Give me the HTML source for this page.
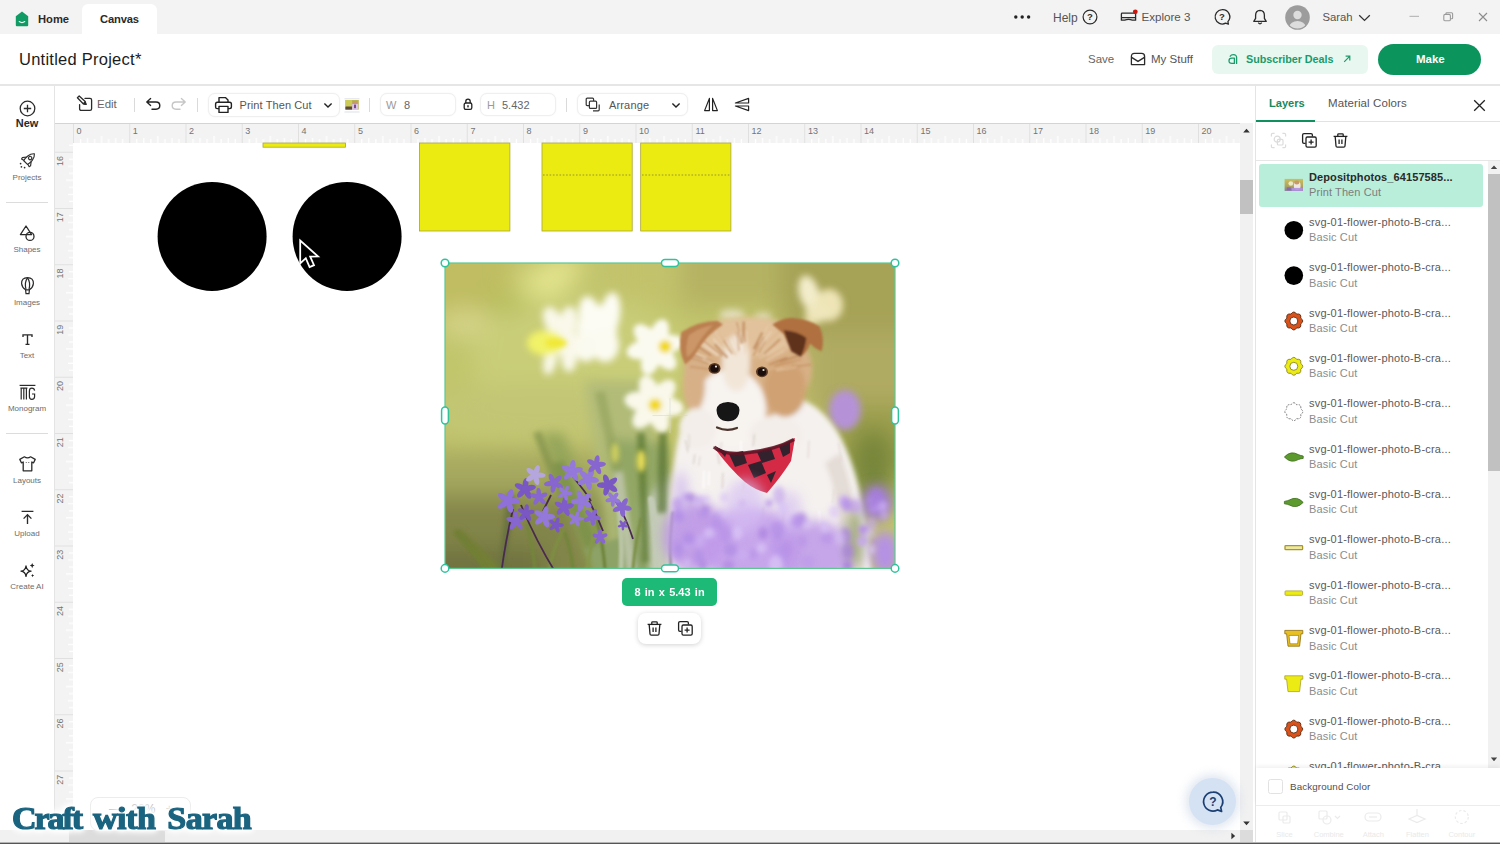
<!DOCTYPE html>
<html lang="en">
<head>
<meta charset="utf-8">
<title>Untitled Project - Canvas</title>
<style>
*{box-sizing:border-box;margin:0;padding:0}
html,body{width:1500px;height:844px;overflow:hidden;background:#fff}
body{font-family:"Liberation Sans",sans-serif;color:#1c1c1c;position:relative}
.a{position:absolute}
.t{position:absolute;white-space:nowrap;line-height:1}
svg{position:absolute;overflow:visible}
/* top bar */
#topbar{left:0;top:0;width:1500px;height:34px;background:#f3f3f3}
#tab{left:82px;top:4px;width:75px;height:30px;background:#fff;border-radius:6px 6px 0 0}
#header{left:0;top:34px;width:1500px;height:50px;background:#fff}
#hline{left:0;top:84px;width:1500px;height:2px;background:#e6e6e6}
/* sidebar */
#side{left:0;top:86px;width:54px;height:744px;background:#fff}
#sideline{left:54px;top:86px;width:1px;height:744px;background:#e4e4e4}
.sl{font-size:8px;color:#6c6c6c;text-align:center;width:54px;left:0}
/* toolbar */
#toolbar{left:55px;top:86px;width:1200px;height:37px;background:#fff}
.box{position:absolute;border:1px solid #efefef;border-radius:7px;background:#fff;box-shadow:0 0 2px rgba(0,0,0,.05)}
.tt{font-size:11.5px;color:#555}
.sep{position:absolute;width:1px;height:14px;top:98px;background:#dadada}
/* rulers */
#rulh{left:55px;top:123px;width:1185px;height:20px;background:#f3f3f3;border-top:1px solid #d4d4d4}
#rulv{left:55px;top:143px;width:18px;height:687px;background:#f3f3f3}
#canvas{left:73px;top:143px;width:1167px;height:687px;background:#fff;overflow:hidden}
.rn{font-size:9px;color:#6e6e6e}
/* scrollbars */
#vs{left:1240px;top:123px;width:13px;height:707px;background:#f1f1f1}
#vst{left:1240px;top:180px;width:13px;height:34px;background:#c1c1c1}
#hs{left:0;top:830px;width:1253px;height:12px;background:#f1f1f1}
#hst{left:69px;top:830px;width:96px;height:12px;background:#dcdcdc}
#botline{left:0;top:842px;width:1500px;height:2px;background:linear-gradient(#b4b4b4 0,#b4b4b4 50%,#555 50%,#555 100%)}
/* panel */
#panel{left:1255px;top:86px;width:245px;height:756px;background:#fff;border-left:1px solid #e4e4e4}
.ln{font-size:11px;color:#4b4b4b;left:1309px}
.ls{font-size:11px;color:#8a8a8a;left:1309px}
</style>
</head>
<body>
<div class="a" id="topbar"></div>
<div class="a" id="tab"></div>
<div class="a" id="header"></div>
<div class="a" id="hline"></div>
<div class="a" id="side"></div>
<div class="a" id="sideline"></div>
<div class="a" id="toolbar"></div>
<div class="a" id="rulh"></div>
<div class="a" id="rulv"></div>
<div class="a" id="canvas"></div>
<div class="a" id="vs"></div>
<div class="a" id="vst"></div>
<div class="a" id="hs"></div>
<div class="a" id="hst"></div>
<div class="a" id="panel"></div>
<div class="a" id="botline"></div>

<!-- top bar content -->
<svg style="left:15px;top:11px" width="14" height="16" viewBox="0 0 14 16"><path d="M7 0.6 L13.2 5.2 V14.2 Q13.2 15.2 12.2 15.2 H1.8 Q0.8 15.2 0.8 14.2 V5.2 Z" fill="#0f9b63"/><path d="M4.3 10.6 Q7 12.6 9.7 10.6" stroke="#e8fff3" stroke-width="1.3" fill="none" stroke-linecap="round"/></svg>
<div class="t" style="left:38px;top:14.200px;font-size:11.200px;font-weight:bold;color:#2a2a2a">Home</div>
<div class="t" style="left:100px;top:14.200px;font-size:11.200px;font-weight:bold;color:#2a2a2a;letter-spacing:-.15px">Canvas</div>
<svg style="left:1013px;top:14px" width="20" height="6"><circle cx="2.800" cy="3" r="1.700" fill="#222"/><circle cx="9.200" cy="3" r="1.700" fill="#222"/><circle cx="15.600" cy="3" r="1.700" fill="#222"/></svg>
<div class="t" style="left:1053px;top:11.500px;font-size:12px;color:#555">Help</div>
<svg style="left:1082px;top:9px" width="16" height="16" viewBox="0 0 16 16"><circle cx="8" cy="8" r="6.9" fill="none" stroke="#2b2b2b" stroke-width="1.2"/><text x="8" y="11.4" font-size="9.5" font-weight="bold" text-anchor="middle" fill="#2b2b2b" font-family="Liberation Sans, sans-serif">?</text></svg>
<svg style="left:1120px;top:9px" width="20" height="14" viewBox="0 0 20 14"><path d="M2.2 4.2 H14.8 Q15.6 4.2 15.6 5 V8.6 H1.4 V5 Q1.4 4.2 2.2 4.2 Z M1.4 8.6 V11.2 H4.6 Q8.5 9.6 12.4 11.2 H15.6 V8.6" fill="none" stroke="#2b2b2b" stroke-width="1.3" stroke-linejoin="round"/><circle cx="15.3" cy="2.8" r="2.4" fill="#c8170d"/></svg>
<div class="t" style="left:1141.500px;top:11.200px;font-size:11.600px;color:#555">Explore 3</div>
<svg style="left:1213px;top:8px" width="18" height="18" viewBox="0 0 18 18"><path d="M9 1.6 A7.2 7.2 0 1 0 12.6 15.2 L15.4 16.2 L14.9 13.6 A7.2 7.2 0 0 0 9 1.6 Z" fill="none" stroke="#2b2b2b" stroke-width="1.3" stroke-linejoin="round"/><text x="9" y="12.2" font-size="9.5" font-weight="bold" text-anchor="middle" fill="#2b2b2b" font-family="Liberation Sans, sans-serif">?</text></svg>
<svg style="left:1252px;top:9px" width="16" height="17" viewBox="0 0 16 17"><path d="M8 1.4 Q3.6 1.6 3.6 6.6 V9.4 L1.8 12.4 H14.2 L12.4 9.4 V6.6 Q12.4 1.6 8 1.4 Z" fill="none" stroke="#2b2b2b" stroke-width="1.3" stroke-linejoin="round"/><path d="M6.3 13.6 Q8 16 9.7 13.6" fill="none" stroke="#2b2b2b" stroke-width="1.3"/></svg>
<svg style="left:1285px;top:5px" width="25" height="25" viewBox="0 0 25 25"><defs><clipPath id="avc"><circle cx="12.5" cy="12.5" r="11"/></clipPath></defs><circle cx="12.5" cy="12.5" r="12.3" fill="#9c9c9c"/><circle cx="12.5" cy="10" r="4.2" fill="#dcdcdc"/><ellipse cx="12.5" cy="21.5" rx="8" ry="5.4" fill="#dcdcdc" clip-path="url(#avc)"/></svg>
<div class="t" style="left:1322.500px;top:11.600px;font-size:11.300px;color:#555">Sarah</div>
<svg style="left:1358px;top:14px" width="13" height="8" viewBox="0 0 13 8"><path d="M1.2 1.2 L6.5 6.4 L11.8 1.2" fill="none" stroke="#333" stroke-width="1.3"/></svg>
<svg style="left:1409px;top:15px" width="11" height="3"><rect x="0.5" y="0.8" width="9.5" height="1.1" fill="#b5b5b5"/></svg>
<svg style="left:1443px;top:12px" width="11" height="10" viewBox="0 0 11 10"><rect x="0.8" y="2.4" width="6.6" height="6.4" rx="1.4" fill="none" stroke="#9a9a9a" stroke-width="1.1"/><path d="M3 2.2 V1.6 Q3 0.8 3.8 0.8 H8.6 Q9.6 0.8 9.6 1.8 V6 Q9.6 6.8 8.8 6.8 H7.6" fill="none" stroke="#9a9a9a" stroke-width="1.1"/></svg>
<svg style="left:1478px;top:12px" width="10" height="10" viewBox="0 0 10 10"><path d="M1 1 L9 9 M9 1 L1 9" stroke="#8c8c8c" stroke-width="1.1"/></svg>


<!-- header content -->
<div class="t" style="left:19px;top:51px;font-size:16.500px;color:#1c1c1c;letter-spacing:.25px">Untitled Project*</div>
<div class="t" style="left:1088px;top:54px;font-size:11.5px;color:#666">Save</div>
<svg style="left:1130px;top:52px" width="16" height="14" viewBox="0 0 16 14"><path d="M1.4 4.4 Q1.4 1.4 4.4 1.4 H11.6 Q14.6 1.4 14.6 4.4 V12.6 H1.4 Z" fill="none" stroke="#2b2b2b" stroke-width="1.3" stroke-linejoin="round"/><path d="M1.6 5.4 L8 9.4 L14.4 5.4" fill="none" stroke="#2b2b2b" stroke-width="1.3"/></svg>
<div class="t" style="left:1151px;top:54px;font-size:11.5px;color:#555">My Stuff</div>
<div class="a" style="left:1212px;top:45px;width:156px;height:29px;border-radius:6px;background:#e8f8f0"></div>
<svg style="left:1227px;top:53px" width="12" height="12" viewBox="0 0 12 12"><path d="M9.6 10.4 V4.6 Q9.6 1.6 6.4 1.6 Q4 1.6 3.2 3.2" fill="none" stroke="#1a9b6c" stroke-width="1.3" stroke-linecap="round"/><path d="M7.4 10.4 H4.8 Q2 10.4 2 7.8 Q2 5.2 4.8 5.2 H7.4 Z" fill="none" stroke="#1a9b6c" stroke-width="1.3" stroke-linejoin="round"/></svg>
<div class="t" style="left:1246px;top:54px;font-size:10.800px;font-weight:bold;color:#1a9b6c;letter-spacing:-.05px">Subscriber Deals</div>
<svg style="left:1343px;top:55px" width="8" height="8" viewBox="0 0 8 8"><path d="M1.2 6.8 L6.6 1.4 M2.6 1.2 H6.8 V5.4" fill="none" stroke="#1a9b6c" stroke-width="1.2"/></svg>
<div class="a" style="left:1378px;top:44px;width:103px;height:31px;border-radius:16px;background:#0c945d"></div>
<div class="t" style="left:1416px;top:54px;font-size:11.5px;font-weight:bold;color:#fff">Make</div>


<!-- sidebar -->
<svg style="left:19px;top:100px" width="17" height="17" viewBox="0 0 17 17"><circle cx="8.5" cy="8.5" r="7.3" fill="none" stroke="#2b2b2b" stroke-width="1.300"/><path d="M8.5 4.8 V12.2 M4.8 8.5 H12.2" stroke="#2b2b2b" stroke-width="1.300"/></svg>
<div class="t" style="left:0;width:54px;text-align:center;top:118px;font-size:11px;font-weight:bold;color:#2a2a2a">New</div>
<svg style="left:18px;top:151px" width="19" height="19" viewBox="0 0 19 19"><g transform="translate(10.600 8.600) rotate(45)" fill="none" stroke="#2f2f2f" stroke-width="1.150" stroke-linejoin="round"><path d="M0 -8.200 C3.800 -5 3.800 1 2.600 4.200 H-2.600 C-3.800 1 -3.800 -5 0 -8.200 Z"/><path d="M-3.200 -.4 L-5.800 3 L-5.400 4.600 L-2.700 3.800 M3.200 -.4 L5.800 3 L5.400 4.600 L2.700 3.800"/><circle cx="0" cy="-2.200" r="1.700"/></g><circle cx="2.600" cy="12.600" r=".85" fill="#2f2f2f"/><circle cx="3.400" cy="15.800" r=".85" fill="#2f2f2f"/><circle cx="6.600" cy="16.600" r=".85" fill="#2f2f2f"/></svg>
<div class="t sl" style="top:173.7px">Projects</div>
<div class="a" style="left:6px;top:202px;width:42px;height:1px;background:#dcdcdc"></div>
<svg style="left:18px;top:224px" width="19" height="19" viewBox="0 0 19 19"><g fill="none" stroke="#2a2a2a" stroke-width="1.300" stroke-linejoin="round"><path d="M8 2 L13.6 10.6 H2.4 Z"/><circle cx="12" cy="12.4" r="4"/></g></svg>
<div class="t sl" style="top:245.7px">Shapes</div>
<svg style="left:19px;top:276px" width="17" height="20" viewBox="0 0 17 20"><g fill="none" stroke="#2a2a2a" stroke-width="1.200"><path d="M8.5 1.6 Q14.6 1.8 14.4 7.6 Q14 11.4 10.4 13.8 H6.6 Q3 11.4 2.6 7.6 Q2.4 1.8 8.5 1.6 Z"/><path d="M8.5 1.8 Q5.2 6 7 13.6 M8.5 1.8 Q11.8 6 10 13.6"/><path d="M6.6 14 L7 17.6 H10 L10.4 14"/></g></svg>
<div class="t sl" style="top:298.7px">Images</div>
<svg style="left:19px;top:331px" width="17" height="17" viewBox="0 0 17 17"><path d="M4 6 V3.800 H13 V6 M8.500 3.800 V13.200 M6.500 13.300 H10.500" fill="none" stroke="#2a2a2a" stroke-width="1.350"/></svg>
<div class="t sl" style="top:351.7px">Text</div>
<svg style="left:18px;top:383px" width="19" height="19" viewBox="0 0 19 19"><g fill="none" stroke="#2a2a2a" stroke-width="1.200"><path d="M1.6 2.4 H17.4"/><path d="M2.4 5.2 H9.4 M3.2 5.2 V16.4 M5.8 5.2 V16.4 M8.4 5.2 V16.4"/><path d="M16.6 7.6 Q16.4 5.2 13.8 5.2 Q11.4 5.2 11.4 8 V13.6 Q11.4 16.4 13.8 16.4 Q16.6 16.4 16.6 13.6 V11 H14"/></g></svg>
<div class="t sl" style="top:404.7px">Monogram</div>
<div class="a" style="left:6px;top:433px;width:42px;height:1px;background:#dcdcdc"></div>
<svg style="left:18px;top:455px" width="19" height="18" viewBox="0 0 19 18"><g fill="none" stroke="#2a2a2a" stroke-width="1.300" stroke-linejoin="round"><path d="M6.4 1.8 Q9.5 4 12.6 1.8 L17.2 4.4 L15.6 7.8 L13.8 7 V15.8 H5.2 V7 L3.4 7.8 L1.8 4.4 Z"/></g><circle cx="8.2" cy="7.4" r=".5" fill="#333"/><circle cx="10.8" cy="7.4" r=".5" fill="#333"/></svg>
<div class="t sl" style="top:476.7px">Layouts</div>
<svg style="left:19px;top:509px" width="17" height="17" viewBox="0 0 17 17"><path d="M2.6 2.4 H14.4 M8.500 15 V6 M4.600 9.600 L8.5 5.6 L12.4 9.600" fill="none" stroke="#2a2a2a" stroke-width="1.350"/></svg>
<div class="t sl" style="top:529.7px">Upload</div>
<svg style="left:18px;top:561px" width="19" height="19" viewBox="0 0 19 19"><path d="M8 5 Q8.6 9.600 13 10.200 Q8.6 10.800 8 15.400 Q7.400 10.800 3 10.200 Q7.400 9.600 8 5 Z" fill="none" stroke="#222" stroke-width="1.300" stroke-linejoin="round"/><path d="M14.200 2 Q14.500 4.300 16.600 4.600 Q14.500 4.900 14.200 7.200 Q13.900 4.900 11.800 4.600 Q13.900 4.300 14.200 2 Z" fill="#222"/><path d="M14.600 13 Q14.800 14.400 16.200 14.600 Q14.800 14.800 14.600 16.200 Q14.400 14.800 13 14.600 Q14.400 14.400 14.600 13 Z" fill="#222"/></svg>
<div class="t sl" style="top:582.7px">Create AI</div>


<!-- toolbar -->
<svg style="left:76px;top:95px" width="18" height="17" viewBox="0 0 18 17"><g fill="none" stroke="#2b2b2b" stroke-width="1.3" stroke-linejoin="round" stroke-linecap="round"><path d="M9 3.400 H14 Q15.600 3.400 15.600 5 V13.800 Q15.600 15.400 14 15.400 H5.200 Q3.600 15.400 3.600 13.800 V9.600"/><path d="M1.400 2.800 L3.200 1 L9.200 6.600 L10 9.400 L7.200 8.800 Z"/><path d="M7.400 8.600 L9 7 L10 9.400 Z" fill="#2b2b2b"/></g></svg>
<div class="t tt" style="left:97px;top:99.200px;color:#666">Edit</div>
<div class="sep" style="left:134px"></div>
<svg style="left:145px;top:97px" width="17" height="14" viewBox="0 0 17 14"><path d="M5.600 1.600 L1.800 5 L5.600 8.400 M2.200 5 H11 Q14.800 5 14.800 8.600 Q14.800 12.200 11 12.200 H7" fill="none" stroke="#222" stroke-width="1.4" stroke-linejoin="round" stroke-linecap="round"/></svg>
<svg style="left:170px;top:97px" width="17" height="14" viewBox="0 0 17 14"><path d="M11.400 1.600 L15.200 5 L11.400 8.400 M14.800 5 H6 Q2.200 5 2.200 8.600 Q2.200 12.200 6 12.200 H10" fill="none" stroke="#c6c6c6" stroke-width="1.400" stroke-linejoin="round" stroke-linecap="round"/></svg>
<div class="sep" style="left:197px"></div>
<div class="box" style="left:208px;top:93px;width:132px;height:24px"></div>
<svg style="left:214px;top:96px" width="19" height="18" viewBox="0 0 19 18"><g fill="none" stroke="#222" stroke-width="1.4" stroke-linejoin="round"><path d="M5 6.200 V1.600 H11.400 L14 4 V6.200"/><path d="M5 12.600 H3.400 Q1.600 12.600 1.600 10.800 V8 Q1.600 6.200 3.400 6.200 H15.600 Q17.400 6.200 17.400 8 V10.800 Q17.400 12.600 15.600 12.600 H14"/><rect x="5" y="10.400" width="9" height="6"/></g></svg>
<div class="t tt" style="left:239.600px;top:100.200px;font-size:11px;letter-spacing:.1px">Print Then Cut</div>
<svg style="left:323px;top:102px" width="10" height="7" viewBox="0 0 10 7"><path d="M1.400 1.400 L5 5 L8.600 1.400" fill="none" stroke="#222" stroke-width="1.400"/></svg>
<svg style="left:344px;top:97.500px" width="16" height="15" viewBox="0 0 16 15"><path d="M.5 .8 H15.500 M.5 14 H15.500" stroke="#cfd3e0" stroke-width=".7"/><rect x="1.400" y="2" width="13.400" height="9.600" fill="#b9b552"/><rect x="1.400" y="2" width="6.600" height="6" fill="#cccb58"/><rect x="1.400" y="8.600" width="6.600" height="3" fill="#5c4a3a"/><rect x="8.600" y="3.200" width="5" height="3.400" fill="#c79a6e"/><rect x="8.200" y="6" width="6" height="5.600" fill="#d9c4ec"/><rect x="10" y="6.600" width="2" height="3.600" fill="#7a4a8a"/></svg>
<div class="sep" style="left:369px"></div>
<div class="box" style="left:380px;top:93px;width:76px;height:23px"></div>
<div class="t tt" style="left:386px;top:100.200px;font-size:11px;color:#9a9a9a">W</div>
<div class="t tt" style="left:404px;top:100.200px;font-size:11px;color:#666">8</div>
<svg style="left:463px;top:98px" width="10" height="13" viewBox="0 0 10 13"><g fill="none" stroke="#222" stroke-width="1.300"><rect x="1.200" y="5" width="7.600" height="6.400" rx="1.600"/><path d="M2.800 5 V3.400 Q2.800 1.200 5 1.200 Q7.200 1.200 7.200 3.400 V5"/></g><rect x="4.300" y="7.200" width="1.400" height="2.200" fill="#222"/></svg>
<div class="box" style="left:480px;top:93px;width:76px;height:23px"></div>
<div class="t tt" style="left:487px;top:100.200px;font-size:11px;color:#9a9a9a">H</div>
<div class="t tt" style="left:502px;top:100.200px;font-size:11px;color:#666">5.432</div>
<div class="sep" style="left:566px"></div>
<div class="box" style="left:577px;top:93px;width:111px;height:23px"></div>
<svg style="left:585px;top:97px" width="16" height="15" viewBox="0 0 16 15"><g fill="none" stroke="#333" stroke-width="1.200" stroke-linejoin="round"><path d="M4.200 8.600 H2.200 Q1.200 8.600 1.200 7.600 V2.200 Q1.200 1.200 2.200 1.200 H7.600 Q8.600 1.200 8.600 2.200 V4"/><rect x="4.400" y="4.200" width="7.200" height="7.200" rx="1"/><path d="M14.200 7.600 V12.800 Q14.200 13.800 13.200 13.800 H8"/></g></svg>
<div class="t tt" style="left:609px;top:100.200px;font-size:11px;letter-spacing:.15px">Arrange</div>
<svg style="left:671px;top:102px" width="10" height="7" viewBox="0 0 10 7"><path d="M1.400 1.400 L5 5 L8.600 1.400" fill="none" stroke="#222" stroke-width="1.400"/></svg>
<svg style="left:703px;top:97px" width="16" height="15" viewBox="0 0 16 15"><g fill="none" stroke="#222" stroke-width="1.200" stroke-linejoin="round"><path d="M6.400 1.400 V13.600 H1.600 Z"/><path d="M9.600 1.400 V13.600 H14.400 Z"/></g></svg>
<svg style="left:734px;top:97px" width="16" height="15" viewBox="0 0 16 15"><g fill="none" stroke="#222" stroke-width="1.200" stroke-linejoin="round"><path d="M14.600 6 H1.400 L14.600 1.400 Z"/><path d="M14.600 9 H1.400 L14.600 13.600 Z"/></g></svg>


<!-- rulers -->
<svg style="left:55px;top:124px" width="1185" height="19" viewBox="0 0 1185 19" font-family="Liberation Sans, sans-serif" font-size="9" fill="#747474"><defs><pattern id="tkh" x="18" y="0" width="56.25" height="19" patternUnits="userSpaceOnUse"><path d="M0.5 0 V19" stroke="#e0e0e0" stroke-width="1"/><path d="M7.53 15 V19 M14.56 14 V19 M21.6 15 V19 M28.6 12 V19 M35.66 15 V19 M42.7 14 V19 M49.7 15 V19" stroke="#fff" stroke-width="1.2"/></pattern></defs><rect x="18" y="0" width="1167" height="19" fill="url(#tkh)"/><text x="21.6" y="9.700">0</text><text x="77.8" y="9.700">1</text><text x="134.1" y="9.700">2</text><text x="190.3" y="9.700">3</text><text x="246.6" y="9.700">4</text><text x="302.9" y="9.700">5</text><text x="359.1" y="9.700">6</text><text x="415.4" y="9.700">7</text><text x="471.6" y="9.700">8</text><text x="527.9" y="9.700">9</text><text x="584.1" y="9.700">10</text><text x="640.4" y="9.700">11</text><text x="696.6" y="9.700">12</text><text x="752.9" y="9.700">13</text><text x="809.1" y="9.700">14</text><text x="865.4" y="9.700">15</text><text x="921.6" y="9.700">16</text><text x="977.9" y="9.700">17</text><text x="1034.1" y="9.700">18</text><text x="1090.3" y="9.700">19</text><text x="1146.6" y="9.700">20</text></svg>
<svg style="left:55px;top:142px" width="18" height="688" viewBox="0 0 18 688" font-family="Liberation Sans, sans-serif" font-size="9" fill="#747474"><defs><pattern id="tkv" x="0" y="9.75" width="18" height="56.25" patternUnits="userSpaceOnUse"><path d="M0 0.5 H18" stroke="#e0e0e0" stroke-width="1"/><path d="M14 7.53 H18 M13 14.56 H18 M14 21.6 H18 M11 28.6 H18 M14 35.66 H18 M13 42.7 H18 M14 49.7 H18" stroke="#fff" stroke-width="1.2"/></pattern></defs><rect x="0" y="0" width="18" height="688" fill="url(#tkv)"/><text transform="translate(8.400 18.9) rotate(-90)" text-anchor="middle">16</text><text transform="translate(8.400 75.2) rotate(-90)" text-anchor="middle">17</text><text transform="translate(8.400 131.4) rotate(-90)" text-anchor="middle">18</text><text transform="translate(8.400 187.7) rotate(-90)" text-anchor="middle">19</text><text transform="translate(8.400 243.9) rotate(-90)" text-anchor="middle">20</text><text transform="translate(8.400 300.2) rotate(-90)" text-anchor="middle">21</text><text transform="translate(8.400 356.4) rotate(-90)" text-anchor="middle">22</text><text transform="translate(8.400 412.7) rotate(-90)" text-anchor="middle">23</text><text transform="translate(8.400 468.9) rotate(-90)" text-anchor="middle">24</text><text transform="translate(8.400 525.2) rotate(-90)" text-anchor="middle">25</text><text transform="translate(8.400 581.5) rotate(-90)" text-anchor="middle">26</text><text transform="translate(8.400 637.7) rotate(-90)" text-anchor="middle">27</text></svg>


<!-- canvas objects -->
<svg style="left:73px;top:142px" width="1167" height="688" viewBox="73 142 1167 688">
<rect x="263" y="143" width="82.500" height="4.200" fill="#ebeb12" stroke="#a9a43a" stroke-width=".8"/>
<rect x="419.500" y="143" width="90.400" height="88" fill="#ebeb12" stroke="#a9a43a" stroke-width=".8"/>
<rect x="542" y="143" width="90.200" height="88" fill="#ebeb12" stroke="#a9a43a" stroke-width=".8"/>
<rect x="640.700" y="143" width="90.200" height="88" fill="#ebeb12" stroke="#a9a43a" stroke-width=".8"/>
<path d="M543 175 H631 M642 175 H730" stroke="#8d8a2e" stroke-width=".9" stroke-dasharray="1.600 1.700" fill="none"/>
<circle cx="212.100" cy="236.400" r="54.500" fill="#000"/>
<circle cx="347.100" cy="236.400" r="54.500" fill="#000"/>
</svg>

<!--PHOTO_START--><svg style="left:445px;top:263px" width="450" height="305.400" viewBox="0 0 450 305.400">
<defs>
<filter id="b12" x="-30%" y="-30%" width="160%" height="160%"><feGaussianBlur stdDeviation="12"/></filter>
<filter id="b8" x="-30%" y="-30%" width="160%" height="160%"><feGaussianBlur stdDeviation="8"/></filter>
<filter id="b6" x="-30%" y="-30%" width="160%" height="160%"><feGaussianBlur stdDeviation="6"/></filter>
<filter id="b4" x="-30%" y="-30%" width="160%" height="160%"><feGaussianBlur stdDeviation="3.600"/></filter>
<filter id="b3" x="-30%" y="-30%" width="160%" height="160%"><feGaussianBlur stdDeviation="2.400"/></filter>
<filter id="b15" x="-30%" y="-30%" width="160%" height="160%"><feGaussianBlur stdDeviation="1.300"/></filter>
<filter id="b07" x="-30%" y="-30%" width="160%" height="160%"><feGaussianBlur stdDeviation=".700"/></filter>
<clipPath id="pc"><rect x="0" y="0" width="450" height="305.400"/></clipPath>
</defs>
<g clip-path="url(#pc)">
<rect x="0" y="0" width="450" height="305.400" fill="#c2c46c"/>
<g filter="url(#b12)">
<rect x="-30" y="-30" width="95" height="85" fill="#c0bd62"/>
<ellipse cx="100" cy="20" rx="42" ry="17" fill="#e4e58e" transform="rotate(-32 100 20)"/>
<ellipse cx="22" cy="60" rx="30" ry="12" fill="#d8d78e"/>
<ellipse cx="68" cy="40" rx="30" ry="12" fill="#b6bd5c"/>
<ellipse cx="60" cy="100" rx="70" ry="22" fill="#c0c66a"/><ellipse cx="135" cy="95" rx="110" ry="60" fill="#c9cd78"/>
<ellipse cx="95" cy="148" rx="110" ry="28" fill="#c2c674"/>
<rect x="170" y="-30" width="70" height="70" fill="#c3c26c"/>
<rect x="-30" y="188" width="250" height="46" fill="#a5a85e"/>
<rect x="-30" y="232" width="240" height="100" fill="#83864a"/>
<rect x="-30" y="285" width="130" height="40" fill="#6f7240"/>
<rect x="235" y="-30" width="110" height="75" fill="#b5b363"/>
<rect x="335" y="-30" width="150" height="110" fill="#a6a256"/>
<rect x="360" y="70" width="120" height="80" fill="#b0ab63"/>
<rect x="385" y="140" width="100" height="70" fill="#9ea04e"/>
<ellipse cx="428" cy="205" rx="24" ry="42" fill="#76853a"/>
</g>
<g filter="url(#b6)">
<path d="M140 118 L168 320 L225 320 L205 118 Z" fill="#b2bc78"/>
<path d="M165 175 L178 320 L232 320 L222 180 Z" fill="#93a765"/>
<path d="M96 170 L150 320 L178 320 L118 170 Z" fill="#8fa257" opacity=".85"/>
<path d="M200 240 L204 320 L236 320 L228 210 Z" fill="#ccd2c0" opacity=".9"/>
</g>
<g filter="url(#b3)">
<path d="M6 268 L44 310 L62 310 L16 266 Z" fill="#737f34"/>
<path d="M62 232 L52 310 L60 310 L70 232 Z" fill="#6c7440"/>
<path d="M88 170 L120 250 L126 248 L96 168 Z" fill="#7f9048" opacity=".7"/>
<path d="M108 200 L150 310 L165 310 L118 198 Z" fill="#7a9048" opacity=".8"/>
<path d="M150 130 L175 240 L184 240 L160 128 Z" fill="#8a9c54" opacity=".5"/>
<path d="M140 286 L150 310 L205 310 L188 270 Z" fill="#8da266"/>
<path d="M192 170 L197 300 L204 300 L200 170 Z" fill="#5f7a36" opacity=".8"/>
<path d="M168 210 L182 310 L192 310 L178 208 Z" fill="#c4cbb4" opacity=".8"/>
<path d="M214 168 L212 250 L222 250 L222 168 Z" fill="#55702e" opacity=".7"/>
</g>
<!-- daffodils -->
<g filter="url(#b4)" fill="#f9f8ea">
<ellipse cx="108" cy="58" rx="9" ry="15" transform="rotate(-25 108 58)"/>
<ellipse cx="123" cy="60" rx="9" ry="17" transform="rotate(8 123 60)"/>
<ellipse cx="105" cy="98" rx="6.500" ry="14" transform="rotate(12 105 98)"/>
<ellipse cx="124" cy="94" rx="8" ry="15"/>
<ellipse cx="116" cy="76" rx="16" ry="16"/><ellipse cx="152" cy="68" rx="20" ry="26" fill="#fdfcf4"/>
<ellipse cx="145" cy="54" rx="11" ry="21" transform="rotate(-10 145 54)" fill="#fdfcf4"/>
<ellipse cx="165" cy="52" rx="10" ry="23" transform="rotate(8 165 52)" fill="#fdfcf4"/>
<ellipse cx="160" cy="82" rx="14" ry="17" fill="#fcfbf2"/>
<ellipse cx="141" cy="84" rx="11" ry="15" fill="#fbfaf0"/>
<ellipse cx="100" cy="80" rx="18" ry="12.500" fill="#f2f268"/>
<ellipse cx="364" cy="30" rx="10" ry="18" transform="rotate(-15 364 30)" fill="#f3ecca"/>
<ellipse cx="384" cy="42" rx="14" ry="16" fill="#eee4b6"/>
<ellipse cx="372" cy="50" rx="12" ry="10" fill="#efe6bc"/>
<ellipse cx="364" cy="66" rx="6" ry="12" fill="#e6daa6"/>
<ellipse cx="400" cy="147" rx="16" ry="20" fill="#b592d8"/>
<ellipse cx="287" cy="52" rx="13" ry="6" fill="#ece6d0" opacity=".8"/>
<ellipse cx="318" cy="54" rx="9" ry="5" fill="#ece6d0" opacity=".7"/>
</g>
<g filter="url(#b3)">
<g fill="#fbfaf0"><circle cx="210" cy="84" r="13"/><ellipse cx="210" cy="70" rx="9" ry="15" transform="rotate(18 210 84)"/><ellipse cx="210" cy="70" rx="9" ry="15" transform="rotate(78 210 84)"/><ellipse cx="210" cy="70" rx="9" ry="15" transform="rotate(138 210 84)"/><ellipse cx="210" cy="70" rx="9" ry="15" transform="rotate(198 210 84)"/><ellipse cx="210" cy="70" rx="9" ry="15" transform="rotate(258 210 84)"/><ellipse cx="210" cy="70" rx="9" ry="15" transform="rotate(318 210 84)"/></g>
<g fill="#f9f8ea"><circle cx="209" cy="141" r="13"/><ellipse cx="209" cy="126.5" rx="9.5" ry="15.5" transform="rotate(40 209 141)"/><ellipse cx="209" cy="126.5" rx="9.5" ry="15.5" transform="rotate(100 209 141)"/><ellipse cx="209" cy="126.5" rx="9.5" ry="15.5" transform="rotate(160 209 141)"/><ellipse cx="209" cy="126.5" rx="9.5" ry="15.5" transform="rotate(220 209 141)"/><ellipse cx="209" cy="126.5" rx="9.5" ry="15.5" transform="rotate(280 209 141)"/><ellipse cx="209" cy="126.5" rx="9.5" ry="15.5" transform="rotate(340 209 141)"/></g>
<ellipse cx="111" cy="80" rx="11" ry="4.500" fill="#f0e834"/>
<circle cx="220" cy="83.500" r="6.500" fill="#f2d90c"/>
<circle cx="210" cy="142" r="6.500" fill="#f2d90c"/>
<ellipse cx="196" cy="198" rx="4.500" ry="11" fill="#e6dc5a"/>
<ellipse cx="170" cy="190" rx="4" ry="10" fill="#dcd860" opacity=".8"/>
</g>
<!-- dog -->
<g filter="url(#b3)">
<path d="M240 150 Q222 200 224 320 L428 320 Q420 215 392 168 Q366 128 330 135 Z" fill="#f5f1ef"/>
<path d="M395 190 Q412 235 420 320 L396 320 Q398 240 380 200 Z" fill="#e4dcd6"/>
<ellipse cx="303" cy="106" rx="64" ry="50" fill="#d8b086"/>
<ellipse cx="303" cy="74" rx="50" ry="20" fill="#e2c29c"/>
<ellipse cx="285" cy="146" rx="36" ry="40" fill="#f7f3ef"/>
<ellipse cx="291" cy="100" rx="14" ry="28" fill="#f2e6d8"/>
<ellipse cx="340" cy="126" rx="21" ry="28" fill="#d0a273"/>
<ellipse cx="249" cy="122" rx="11" ry="27" fill="#d8b088"/>
<ellipse cx="252" cy="165" rx="18" ry="20" fill="#f3eee9"/>
<ellipse cx="330" cy="172" rx="26" ry="18" fill="#f3eee9"/>
</g>
<g filter="url(#b15)" fill="none" stroke-linecap="round"><path d="M265.2 99.4 L247.5 93.9" stroke="#e6c9a6" stroke-width="1.9" opacity=".7"/><path d="M309.5 85.6 L318.2 70.3" stroke="#b98253" stroke-width="1.9" opacity=".7"/><path d="M293.9 87.4 L291.9 68.8" stroke="#c08c5c" stroke-width="1.3" opacity=".7"/><path d="M279.3 88.4 L268.9 76.4" stroke="#ecd6ba" stroke-width="2.4" opacity=".7"/><path d="M268.6 99.4 L245.2 90.7" stroke="#b98253" stroke-width="1.7" opacity=".7"/><path d="M323.6 106.4 L345.9 102.2" stroke="#ddb88e" stroke-width="1.6" opacity=".7"/><path d="M283.6 86.5 L270.9 69.3" stroke="#e6c9a6" stroke-width="2.3" opacity=".7"/><path d="M295.2 81.5 L295.3 70.1" stroke="#ecd6ba" stroke-width="2.4" opacity=".7"/><path d="M322.2 96.9 L338.4 88.0" stroke="#e6c9a6" stroke-width="2.3" opacity=".7"/><path d="M283.2 84.7 L273.2 70.1" stroke="#ddb88e" stroke-width="1.4" opacity=".7"/><path d="M276.5 92.2 L257.2 77.3" stroke="#b98253" stroke-width="1.7" opacity=".7"/><path d="M281.7 94.0 L270.4 81.9" stroke="#b98253" stroke-width="2.4" opacity=".7"/><path d="M314.1 89.3 L320.2 77.9" stroke="#c08c5c" stroke-width="1.5" opacity=".7"/><path d="M274.2 91.8 L257.7 79.5" stroke="#e6c9a6" stroke-width="1.4" opacity=".7"/><path d="M301.6 82.4 L301.2 68.4" stroke="#ecd6ba" stroke-width="2.3" opacity=".7"/><path d="M314.9 83.2 L325.8 69.1" stroke="#ecd6ba" stroke-width="1.7" opacity=".7"/><path d="M290.4 91.2 L281.5 74.8" stroke="#e6c9a6" stroke-width="2.4" opacity=".7"/><path d="M293.5 90.5 L287.4 74.0" stroke="#ecd6ba" stroke-width="1.4" opacity=".7"/><path d="M268.9 100.9 L257.9 96.2" stroke="#ecd6ba" stroke-width="1.7" opacity=".7"/><path d="M314.4 79.2 L322.6 63.4" stroke="#e6c9a6" stroke-width="2.2" opacity=".7"/><path d="M331.8 107.2 L349.6 104.4" stroke="#e6c9a6" stroke-width="2.1" opacity=".7"/><path d="M319.7 90.5 L334.5 76.6" stroke="#c08c5c" stroke-width="2.3" opacity=".7"/><path d="M300.2 89.7 L299.1 73.6" stroke="#ecd6ba" stroke-width="1.6" opacity=".7"/><path d="M308.5 92.3 L318.5 74.6" stroke="#c08c5c" stroke-width="1.6" opacity=".7"/><path d="M272.7 91.7 L258.7 80.4" stroke="#ecd6ba" stroke-width="2.2" opacity=".7"/><path d="M339.2 105.3 L365.8 101.5" stroke="#c08c5c" stroke-width="1.4" opacity=".7"/><path d="M297.2 80.3 L298.4 59.4" stroke="#b98253" stroke-width="1.5" opacity=".7"/><path d="M320.9 81.8 L334.1 68.6" stroke="#ddb88e" stroke-width="2.3" opacity=".7"/><path d="M287.0 90.2 L278.8 78.1" stroke="#c08c5c" stroke-width="1.8" opacity=".7"/><path d="M334.5 106.1 L351.2 104.0" stroke="#ddb88e" stroke-width="2.2" opacity=".7"/><path d="M262.8 100.2 L240.1 92.4" stroke="#c08c5c" stroke-width="1.8" opacity=".7"/><path d="M265.8 91.9 L252.7 83.2" stroke="#b98253" stroke-width="1.8" opacity=".7"/><path d="M315.0 95.5 L328.2 86.0" stroke="#e6c9a6" stroke-width="1.4" opacity=".7"/><path d="M335.5 98.4 L352.5 93.3" stroke="#b98253" stroke-width="2.0" opacity=".7"/><path d="M283.2 85.8 L273.7 74.7" stroke="#e6c9a6" stroke-width="1.8" opacity=".7"/><path d="M329.7 102.9 L355.8 96.3" stroke="#c08c5c" stroke-width="1.2" opacity=".7"/><path d="M272.6 92.7 L253.9 80.0" stroke="#ecd6ba" stroke-width="1.7" opacity=".7"/><path d="M260.7 94.6 L243.7 87.3" stroke="#ecd6ba" stroke-width="2.2" opacity=".7"/><path d="M300.0 78.8 L299.0 59.0" stroke="#c08c5c" stroke-width="1.8" opacity=".7"/><path d="M264.9 106.4 L245.6 103.7" stroke="#c08c5c" stroke-width="1.4" opacity=".7"/><path d="M295.0 80.5 L292.4 64.0" stroke="#ecd6ba" stroke-width="1.8" opacity=".7"/><path d="M296.0 79.6 L292.0 59.8" stroke="#c08c5c" stroke-width="1.5" opacity=".7"/><path d="M322.5 91.8 L339.1 80.0" stroke="#e6c9a6" stroke-width="1.7" opacity=".7"/><path d="M309.0 85.3 L316.7 70.1" stroke="#b98253" stroke-width="1.8" opacity=".7"/><path d="M324.8 93.8 L338.4 85.3" stroke="#ddb88e" stroke-width="2.3" opacity=".7"/><path d="M324.0 101.7 L341.4 94.9" stroke="#b98253" stroke-width="1.7" opacity=".7"/><path d="M249.8 191.7 l-1.2 8.7" stroke="#d8cfc8" stroke-width="1.600" opacity=".8"/><path d="M257.8 239.9 l1.0 17.4" stroke="#d8cfc8" stroke-width="1.600" opacity=".8"/><path d="M261.2 249.5 l1.5 17.7" stroke="#e2dad4" stroke-width="1.600" opacity=".8"/><path d="M253.2 249.6 l2.0 9.6" stroke="#d8cfc8" stroke-width="1.600" opacity=".8"/><path d="M264.2 208.8 l-0.5 13.2" stroke="#ffffff" stroke-width="1.600" opacity=".8"/><path d="M295.8 178.3 l0.3 11.7" stroke="#ffffff" stroke-width="1.600" opacity=".8"/><path d="M309.4 171.6 l-1.2 11.3" stroke="#d8cfc8" stroke-width="1.600" opacity=".8"/><path d="M393.6 180.2 l2.8 17.2" stroke="#e2dad4" stroke-width="1.600" opacity=".8"/><path d="M255.0 193.9 l-1.4 8.4" stroke="#e2dad4" stroke-width="1.600" opacity=".8"/><path d="M259.0 208.0 l-0.6 17.1" stroke="#ffffff" stroke-width="1.600" opacity=".8"/><path d="M324.9 216.3 l-2.5 12.9" stroke="#ffffff" stroke-width="1.600" opacity=".8"/><path d="M247.3 231.9 l-1.4 12.3" stroke="#e2dad4" stroke-width="1.600" opacity=".8"/><path d="M240.7 178.0 l2.1 10.6" stroke="#d8cfc8" stroke-width="1.600" opacity=".8"/><path d="M248.8 247.6 l3.0 12.5" stroke="#ffffff" stroke-width="1.600" opacity=".8"/><path d="M305.7 252.4 l0.2 14.2" stroke="#e2dad4" stroke-width="1.600" opacity=".8"/><path d="M276.6 179.9 l-1.9 9.6" stroke="#e2dad4" stroke-width="1.600" opacity=".8"/><path d="M389.0 226.6 l-1.3 13.3" stroke="#e2dad4" stroke-width="1.600" opacity=".8"/><path d="M319.0 186.0 l3.0 11.5" stroke="#e2dad4" stroke-width="1.600" opacity=".8"/><path d="M244.0 171.7 l0.1 13.1" stroke="#e2dad4" stroke-width="1.600" opacity=".8"/><path d="M277.8 210.2 l-0.4 14.6" stroke="#d8cfc8" stroke-width="1.600" opacity=".8"/><path d="M318.2 245.1 l-1.2 11.9" stroke="#d8cfc8" stroke-width="1.600" opacity=".8"/><path d="M272.9 190.7 l1.4 10.0" stroke="#d8cfc8" stroke-width="1.600" opacity=".8"/><path d="M260.6 259.0 l-2.9 17.8" stroke="#e2dad4" stroke-width="1.600" opacity=".8"/><path d="M339.3 249.2 l-2.5 12.3" stroke="#e2dad4" stroke-width="1.600" opacity=".8"/><path d="M374.3 248.3 l0.6 14.7" stroke="#ffffff" stroke-width="1.600" opacity=".8"/><path d="M350.2 174.1 l-0.3 9.9" stroke="#ffffff" stroke-width="1.600" opacity=".8"/><path d="M280.6 256.6 l-1.1 17.7" stroke="#d8cfc8" stroke-width="1.600" opacity=".8"/><path d="M243.6 249.4 l-3.0 10.2" stroke="#e2dad4" stroke-width="1.600" opacity=".8"/><path d="M299.8 212.7 l-1.5 13.0" stroke="#e2dad4" stroke-width="1.600" opacity=".8"/><path d="M363.8 178.2 l-0.6 16.2" stroke="#e2dad4" stroke-width="1.600" opacity=".8"/></g>
<g filter="url(#b15)">
<path d="M236.400 69 Q254 58 272.400 57.800 L278 61.600 Q262 72 253.400 86.300 Q248 96 240.200 101.400 Q232 86 236.400 69 Z" fill="#bb7f50"/>
<path d="M244 72 Q256 64 268 62 Q256 74 250 86 Q246 92 242 94 Q240 84 244 72 Z" fill="#cc9668"/>
<path d="M327.300 61.600 Q338 54 348.200 55 Q364 56 374.700 63.500 Q380 76 376.600 88.200 Q370 86 365.200 80.600 Q362 90 355.700 93.800 L346.300 88.200 Q342 78 338.700 71.100 Z" fill="#b0703f"/>
<path d="M338.700 67.300 Q352 68 361.400 74.900 Q360 86 355.700 93.800 L346.300 88.200 Q342 78 338.700 67.300 Z" fill="#5e301c"/>
</g>
<g filter="url(#b07)">
<ellipse cx="269.500" cy="105.400" rx="6" ry="5.400" fill="#5a3a26"/>
<ellipse cx="269.500" cy="105.600" rx="4.200" ry="4" fill="#1c100c"/>
<ellipse cx="317" cy="108.800" rx="6" ry="5.400" fill="#5a3a26"/>
<ellipse cx="317" cy="109" rx="4.200" ry="4" fill="#1c100c"/>
<circle cx="271" cy="103.600" r="1.100" fill="#e8e0d8"/><circle cx="318.500" cy="107" r="1.100" fill="#e8e0d8"/>
<path d="M271.500 147 Q272 139.500 283 139 Q294 139.500 294.500 147 Q294 155 288 157.500 Q283 159 278 157.500 Q272 155 271.500 147 Z" fill="#141213"/>
<path d="M272 164.500 Q282 169 292 165" stroke="#4a342c" stroke-width="2.200" fill="none" stroke-linecap="round"/>
</g>
<g filter="url(#b07)">
<path d="M268 183 Q276 191 300 189 Q330 186 350 175 L346 198 Q336 214 322 230 Q310 227 300 219 Q284 205 268 183 Z" fill="#d42a44"/>
<path d="M284 191 L298 188 L302 200 L290 204 Z M312 189 L326 185 L330 196 L317 200 Z M303 202 L316 198 L321 210 L309 215 Z M334 183 L345 178 L345 190 L338 194 Z M270 183 L282 189 L280 194 Z M322 212 L331 208 L326 220 Z" fill="#33222e"/>
<path d="M269 184 Q277 192 300 190 Q330 187 349 176.500" stroke="#5a1626" stroke-width="3.500" fill="none" opacity=".85"/>
</g>
<g filter="url(#b15)" fill="none" stroke-linecap="round">
<path d="M40 306 Q30 288 12 270" stroke="#6f8036" stroke-width="3.500"/>
<path d="M58 306 Q60 280 66 250" stroke="#6a6f48" stroke-width="2.500"/>
<path d="M90 306 Q88 284 82 262" stroke="#73863a" stroke-width="3"/>
<path d="M104 306 Q108 286 118 268" stroke="#7d9042" stroke-width="3"/>
<path d="M128 306 Q126 286 120 270" stroke="#71853a" stroke-width="3"/>
<path d="M142 306 Q146 284 150 262" stroke="#86984c" stroke-width="3.500"/>
<path d="M160 306 Q158 280 152 258" stroke="#6d8238" stroke-width="3"/>
<path d="M176 306 Q178 270 172 230" stroke="#b9c4a4" stroke-width="5"/>
<path d="M188 306 Q190 282 196 256" stroke="#7a8e44" stroke-width="3"/>
<path d="M212 306 Q212 270 206 236" stroke="#c3cbb6" stroke-width="6"/>
<path d="M226 306 Q224 280 228 250" stroke="#8a8f7a" stroke-width="3"/>
</g>
<!-- hyacinth -->
<g filter="url(#b07)">
<path d="M76 242 Q92 280 112 312 M106 232 Q102 240 98 248 M166 232 Q178 246 188 276 M128 214 Q140 228 146 238 M144 238 Q152 252 158 268 M68 246 Q60 280 56 312" stroke="#4a2a50" stroke-width="1.800" fill="none"/>
<g fill="#8f70d8"><ellipse cx="63.0" cy="232.3" rx="3.1" ry="6.5" transform="rotate(19 63.0 238.0)"/><ellipse cx="63.0" cy="232.3" rx="3.1" ry="6.5" transform="rotate(91 63.0 238.0)"/><ellipse cx="63.0" cy="232.3" rx="3.1" ry="6.5" transform="rotate(163 63.0 238.0)"/><ellipse cx="63.0" cy="232.3" rx="3.1" ry="6.5" transform="rotate(235 63.0 238.0)"/><ellipse cx="63.0" cy="232.3" rx="3.1" ry="6.5" transform="rotate(307 63.0 238.0)"/><circle cx="63.0" cy="238.0" r="4.4"/></g><g fill="#7a58c4"><ellipse cx="80.0" cy="220.8" rx="2.9" ry="5.9" transform="rotate(6 80.0 226.0)"/><ellipse cx="80.0" cy="220.8" rx="2.9" ry="5.9" transform="rotate(78 80.0 226.0)"/><ellipse cx="80.0" cy="220.8" rx="2.9" ry="5.9" transform="rotate(150 80.0 226.0)"/><ellipse cx="80.0" cy="220.8" rx="2.9" ry="5.9" transform="rotate(222 80.0 226.0)"/><ellipse cx="80.0" cy="220.8" rx="2.9" ry="5.9" transform="rotate(294 80.0 226.0)"/><circle cx="80.0" cy="226.0" r="4.0"/></g><g fill="#8766d0"><ellipse cx="94.0" cy="229.8" rx="2.3" ry="4.7" transform="rotate(68 94.0 234.0)"/><ellipse cx="94.0" cy="229.8" rx="2.3" ry="4.7" transform="rotate(140 94.0 234.0)"/><ellipse cx="94.0" cy="229.8" rx="2.3" ry="4.7" transform="rotate(212 94.0 234.0)"/><ellipse cx="94.0" cy="229.8" rx="2.3" ry="4.7" transform="rotate(284 94.0 234.0)"/><ellipse cx="94.0" cy="229.8" rx="2.3" ry="4.7" transform="rotate(356 94.0 234.0)"/><circle cx="94.0" cy="234.0" r="3.2"/></g><g fill="#8766d0"><ellipse cx="109.0" cy="215.3" rx="2.6" ry="5.3" transform="rotate(46 109.0 220.0)"/><ellipse cx="109.0" cy="215.3" rx="2.6" ry="5.3" transform="rotate(118 109.0 220.0)"/><ellipse cx="109.0" cy="215.3" rx="2.6" ry="5.3" transform="rotate(190 109.0 220.0)"/><ellipse cx="109.0" cy="215.3" rx="2.6" ry="5.3" transform="rotate(262 109.0 220.0)"/><ellipse cx="109.0" cy="215.3" rx="2.6" ry="5.3" transform="rotate(334 109.0 220.0)"/><circle cx="109.0" cy="220.0" r="3.6"/></g><g fill="#9478da"><ellipse cx="127.0" cy="202.8" rx="2.9" ry="5.9" transform="rotate(7 127.0 208.0)"/><ellipse cx="127.0" cy="202.8" rx="2.9" ry="5.9" transform="rotate(79 127.0 208.0)"/><ellipse cx="127.0" cy="202.8" rx="2.9" ry="5.9" transform="rotate(151 127.0 208.0)"/><ellipse cx="127.0" cy="202.8" rx="2.9" ry="5.9" transform="rotate(223 127.0 208.0)"/><ellipse cx="127.0" cy="202.8" rx="2.9" ry="5.9" transform="rotate(295 127.0 208.0)"/><circle cx="127.0" cy="208.0" r="4.0"/></g><g fill="#9478da"><ellipse cx="143.0" cy="210.8" rx="2.9" ry="5.9" transform="rotate(27 143.0 216.0)"/><ellipse cx="143.0" cy="210.8" rx="2.9" ry="5.9" transform="rotate(99 143.0 216.0)"/><ellipse cx="143.0" cy="210.8" rx="2.9" ry="5.9" transform="rotate(171 143.0 216.0)"/><ellipse cx="143.0" cy="210.8" rx="2.9" ry="5.9" transform="rotate(243 143.0 216.0)"/><ellipse cx="143.0" cy="210.8" rx="2.9" ry="5.9" transform="rotate(315 143.0 216.0)"/><circle cx="143.0" cy="216.0" r="4.0"/></g><g fill="#8766d0"><ellipse cx="151.0" cy="197.3" rx="2.6" ry="5.3" transform="rotate(11 151.0 202.0)"/><ellipse cx="151.0" cy="197.3" rx="2.6" ry="5.3" transform="rotate(83 151.0 202.0)"/><ellipse cx="151.0" cy="197.3" rx="2.6" ry="5.3" transform="rotate(155 151.0 202.0)"/><ellipse cx="151.0" cy="197.3" rx="2.6" ry="5.3" transform="rotate(227 151.0 202.0)"/><ellipse cx="151.0" cy="197.3" rx="2.6" ry="5.3" transform="rotate(299 151.0 202.0)"/><circle cx="151.0" cy="202.0" r="3.6"/></g><g fill="#7a58c4"><ellipse cx="163.0" cy="216.8" rx="2.9" ry="5.9" transform="rotate(53 163.0 222.0)"/><ellipse cx="163.0" cy="216.8" rx="2.9" ry="5.9" transform="rotate(125 163.0 222.0)"/><ellipse cx="163.0" cy="216.8" rx="2.9" ry="5.9" transform="rotate(197 163.0 222.0)"/><ellipse cx="163.0" cy="216.8" rx="2.9" ry="5.9" transform="rotate(269 163.0 222.0)"/><ellipse cx="163.0" cy="216.8" rx="2.9" ry="5.9" transform="rotate(341 163.0 222.0)"/><circle cx="163.0" cy="222.0" r="4.0"/></g><g fill="#8766d0"><ellipse cx="177.0" cy="239.3" rx="2.6" ry="5.3" transform="rotate(30 177.0 244.0)"/><ellipse cx="177.0" cy="239.3" rx="2.6" ry="5.3" transform="rotate(102 177.0 244.0)"/><ellipse cx="177.0" cy="239.3" rx="2.6" ry="5.3" transform="rotate(174 177.0 244.0)"/><ellipse cx="177.0" cy="239.3" rx="2.6" ry="5.3" transform="rotate(246 177.0 244.0)"/><ellipse cx="177.0" cy="239.3" rx="2.6" ry="5.3" transform="rotate(318 177.0 244.0)"/><circle cx="177.0" cy="244.0" r="3.6"/></g><g fill="#8766d0"><ellipse cx="71.0" cy="253.3" rx="2.6" ry="5.3" transform="rotate(70 71.0 258.0)"/><ellipse cx="71.0" cy="253.3" rx="2.6" ry="5.3" transform="rotate(142 71.0 258.0)"/><ellipse cx="71.0" cy="253.3" rx="2.6" ry="5.3" transform="rotate(214 71.0 258.0)"/><ellipse cx="71.0" cy="253.3" rx="2.6" ry="5.3" transform="rotate(286 71.0 258.0)"/><ellipse cx="71.0" cy="253.3" rx="2.6" ry="5.3" transform="rotate(358 71.0 258.0)"/><circle cx="71.0" cy="258.0" r="3.6"/></g><g fill="#7a58c4"><ellipse cx="81.0" cy="245.8" rx="2.3" ry="4.7" transform="rotate(7 81.0 250.0)"/><ellipse cx="81.0" cy="245.8" rx="2.3" ry="4.7" transform="rotate(79 81.0 250.0)"/><ellipse cx="81.0" cy="245.8" rx="2.3" ry="4.7" transform="rotate(151 81.0 250.0)"/><ellipse cx="81.0" cy="245.8" rx="2.3" ry="4.7" transform="rotate(223 81.0 250.0)"/><ellipse cx="81.0" cy="245.8" rx="2.3" ry="4.7" transform="rotate(295 81.0 250.0)"/><circle cx="81.0" cy="250.0" r="3.2"/></g><g fill="#9478da"><ellipse cx="99.0" cy="248.8" rx="2.9" ry="5.9" transform="rotate(15 99.0 254.0)"/><ellipse cx="99.0" cy="248.8" rx="2.9" ry="5.9" transform="rotate(87 99.0 254.0)"/><ellipse cx="99.0" cy="248.8" rx="2.9" ry="5.9" transform="rotate(159 99.0 254.0)"/><ellipse cx="99.0" cy="248.8" rx="2.9" ry="5.9" transform="rotate(231 99.0 254.0)"/><ellipse cx="99.0" cy="248.8" rx="2.9" ry="5.9" transform="rotate(303 99.0 254.0)"/><circle cx="99.0" cy="254.0" r="4.0"/></g><g fill="#7f5cc8"><ellipse cx="119.0" cy="239.3" rx="2.6" ry="5.3" transform="rotate(7 119.0 244.0)"/><ellipse cx="119.0" cy="239.3" rx="2.6" ry="5.3" transform="rotate(79 119.0 244.0)"/><ellipse cx="119.0" cy="239.3" rx="2.6" ry="5.3" transform="rotate(151 119.0 244.0)"/><ellipse cx="119.0" cy="239.3" rx="2.6" ry="5.3" transform="rotate(223 119.0 244.0)"/><ellipse cx="119.0" cy="239.3" rx="2.6" ry="5.3" transform="rotate(295 119.0 244.0)"/><circle cx="119.0" cy="244.0" r="3.6"/></g><g fill="#9478da"><ellipse cx="137.0" cy="232.8" rx="2.9" ry="5.9" transform="rotate(50 137.0 238.0)"/><ellipse cx="137.0" cy="232.8" rx="2.9" ry="5.9" transform="rotate(122 137.0 238.0)"/><ellipse cx="137.0" cy="232.8" rx="2.9" ry="5.9" transform="rotate(194 137.0 238.0)"/><ellipse cx="137.0" cy="232.8" rx="2.9" ry="5.9" transform="rotate(266 137.0 238.0)"/><ellipse cx="137.0" cy="232.8" rx="2.9" ry="5.9" transform="rotate(338 137.0 238.0)"/><circle cx="137.0" cy="238.0" r="4.0"/></g><g fill="#8766d0"><ellipse cx="147.0" cy="249.8" rx="2.3" ry="4.7" transform="rotate(28 147.0 254.0)"/><ellipse cx="147.0" cy="249.8" rx="2.3" ry="4.7" transform="rotate(100 147.0 254.0)"/><ellipse cx="147.0" cy="249.8" rx="2.3" ry="4.7" transform="rotate(172 147.0 254.0)"/><ellipse cx="147.0" cy="249.8" rx="2.3" ry="4.7" transform="rotate(244 147.0 254.0)"/><ellipse cx="147.0" cy="249.8" rx="2.3" ry="4.7" transform="rotate(316 147.0 254.0)"/><circle cx="147.0" cy="254.0" r="3.2"/></g><g fill="#8766d0"><ellipse cx="155.0" cy="270.3" rx="2.0" ry="4.1" transform="rotate(71 155.0 274.0)"/><ellipse cx="155.0" cy="270.3" rx="2.0" ry="4.1" transform="rotate(143 155.0 274.0)"/><ellipse cx="155.0" cy="270.3" rx="2.0" ry="4.1" transform="rotate(215 155.0 274.0)"/><ellipse cx="155.0" cy="270.3" rx="2.0" ry="4.1" transform="rotate(287 155.0 274.0)"/><ellipse cx="155.0" cy="270.3" rx="2.0" ry="4.1" transform="rotate(359 155.0 274.0)"/><circle cx="155.0" cy="274.0" r="2.8"/></g><g fill="#7f5cc8"><ellipse cx="178.0" cy="259.4" rx="1.4" ry="2.9" transform="rotate(37 178.0 262.0)"/><ellipse cx="178.0" cy="259.4" rx="1.4" ry="2.9" transform="rotate(109 178.0 262.0)"/><ellipse cx="178.0" cy="259.4" rx="1.4" ry="2.9" transform="rotate(181 178.0 262.0)"/><ellipse cx="178.0" cy="259.4" rx="1.4" ry="2.9" transform="rotate(253 178.0 262.0)"/><ellipse cx="178.0" cy="259.4" rx="1.4" ry="2.9" transform="rotate(325 178.0 262.0)"/><circle cx="178.0" cy="262.0" r="2.0"/></g><g fill="#7a58c4"><ellipse cx="111.0" cy="258.3" rx="2.0" ry="4.1" transform="rotate(18 111.0 262.0)"/><ellipse cx="111.0" cy="258.3" rx="2.0" ry="4.1" transform="rotate(90 111.0 262.0)"/><ellipse cx="111.0" cy="258.3" rx="2.0" ry="4.1" transform="rotate(162 111.0 262.0)"/><ellipse cx="111.0" cy="258.3" rx="2.0" ry="4.1" transform="rotate(234 111.0 262.0)"/><ellipse cx="111.0" cy="258.3" rx="2.0" ry="4.1" transform="rotate(306 111.0 262.0)"/><circle cx="111.0" cy="262.0" r="2.8"/></g><g fill="#9478da"><ellipse cx="131.0" cy="252.3" rx="2.0" ry="4.1" transform="rotate(15 131.0 256.0)"/><ellipse cx="131.0" cy="252.3" rx="2.0" ry="4.1" transform="rotate(87 131.0 256.0)"/><ellipse cx="131.0" cy="252.3" rx="2.0" ry="4.1" transform="rotate(159 131.0 256.0)"/><ellipse cx="131.0" cy="252.3" rx="2.0" ry="4.1" transform="rotate(231 131.0 256.0)"/><ellipse cx="131.0" cy="252.3" rx="2.0" ry="4.1" transform="rotate(303 131.0 256.0)"/><circle cx="131.0" cy="256.0" r="2.8"/></g><g fill="#9478da"><ellipse cx="168.0" cy="232.3" rx="2.0" ry="4.1" transform="rotate(39 168.0 236.0)"/><ellipse cx="168.0" cy="232.3" rx="2.0" ry="4.1" transform="rotate(111 168.0 236.0)"/><ellipse cx="168.0" cy="232.3" rx="2.0" ry="4.1" transform="rotate(183 168.0 236.0)"/><ellipse cx="168.0" cy="232.3" rx="2.0" ry="4.1" transform="rotate(255 168.0 236.0)"/><ellipse cx="168.0" cy="232.3" rx="2.0" ry="4.1" transform="rotate(327 168.0 236.0)"/><circle cx="168.0" cy="236.0" r="2.8"/></g><g fill="#9478da"><ellipse cx="120.0" cy="226.3" rx="2.0" ry="4.1" transform="rotate(23 120.0 230.0)"/><ellipse cx="120.0" cy="226.3" rx="2.0" ry="4.1" transform="rotate(95 120.0 230.0)"/><ellipse cx="120.0" cy="226.3" rx="2.0" ry="4.1" transform="rotate(167 120.0 230.0)"/><ellipse cx="120.0" cy="226.3" rx="2.0" ry="4.1" transform="rotate(239 120.0 230.0)"/><ellipse cx="120.0" cy="226.3" rx="2.0" ry="4.1" transform="rotate(311 120.0 230.0)"/><circle cx="120.0" cy="230.0" r="2.8"/></g><g fill="#b6a6de"><ellipse cx="90.0" cy="207.1" rx="2.7" ry="5.6" transform="rotate(20 90.0 212.0)"/><ellipse cx="90.0" cy="207.1" rx="2.7" ry="5.6" transform="rotate(92 90.0 212.0)"/><ellipse cx="90.0" cy="207.1" rx="2.7" ry="5.6" transform="rotate(164 90.0 212.0)"/><ellipse cx="90.0" cy="207.1" rx="2.7" ry="5.6" transform="rotate(236 90.0 212.0)"/><ellipse cx="90.0" cy="207.1" rx="2.7" ry="5.6" transform="rotate(308 90.0 212.0)"/><circle cx="90.0" cy="212.0" r="3.8"/></g>
</g>
<!-- purple foreground -->
<g filter="url(#b6)">
<ellipse cx="250" cy="274" rx="32" ry="36" fill="#bb95e6" opacity=".9"/>
<ellipse cx="305" cy="284" rx="50" ry="40" fill="#c09bea" opacity=".88"/>
<ellipse cx="368" cy="290" rx="40" ry="32" fill="#bd98e8" opacity=".85"/>
<ellipse cx="300" cy="242" rx="20" ry="26" fill="#d6bef2" opacity=".65"/>
<ellipse cx="236" cy="232" rx="7" ry="24" fill="#cbb2ec" opacity=".7"/>
<ellipse cx="345" cy="250" rx="12" ry="22" fill="#d0b6f0" opacity=".55"/>
<ellipse cx="432" cy="240" rx="15" ry="18" fill="#a57edb"/>
<ellipse cx="440" cy="290" rx="14" ry="22" fill="#b591e5"/>
<ellipse cx="410" cy="275" rx="9" ry="30" fill="#9aa66c" opacity=".8"/>
</g>
<g filter="url(#b3)"><ellipse cx="240.7" cy="233.6" rx="4.2" ry="3.7" fill="#c9abf0" opacity="0.88"/><ellipse cx="409.5" cy="243.3" rx="6.6" ry="7.3" fill="#bb97ea" opacity="0.63"/><ellipse cx="436.8" cy="242.9" rx="5.9" ry="4.9" fill="#c9abf0" opacity="0.83"/><ellipse cx="417.5" cy="277.8" rx="5.9" ry="5.4" fill="#bb97ea" opacity="0.71"/><ellipse cx="336.9" cy="293.0" rx="6.2" ry="8.9" fill="#bb97ea" opacity="0.78"/><ellipse cx="430.9" cy="278.9" rx="3.3" ry="3.0" fill="#b48fe6" opacity="0.64"/><ellipse cx="253.8" cy="293.0" rx="5.2" ry="6.8" fill="#b48fe6" opacity="0.77"/><ellipse cx="333.8" cy="232.2" rx="6.2" ry="9.4" fill="#bb97ea" opacity="0.54"/><ellipse cx="341.4" cy="286.4" rx="4.9" ry="7.2" fill="#b48fe6" opacity="0.59"/><ellipse cx="389.3" cy="248.8" rx="5.6" ry="6.7" fill="#d8c2f5" opacity="0.65"/><ellipse cx="331.6" cy="281.9" rx="6.1" ry="7.9" fill="#bb97ea" opacity="0.58"/><ellipse cx="356.7" cy="256.2" rx="5.6" ry="7.3" fill="#a67edd" opacity="0.55"/><ellipse cx="332.3" cy="267.5" rx="6.9" ry="9.3" fill="#b48fe6" opacity="0.77"/><ellipse cx="292.5" cy="269.7" rx="4.9" ry="6.9" fill="#d8c2f5" opacity="0.90"/><ellipse cx="346.2" cy="254.8" rx="3.3" ry="2.7" fill="#d8c2f5" opacity="0.68"/><ellipse cx="402.5" cy="302.7" rx="4.8" ry="5.3" fill="#a67edd" opacity="0.87"/><ellipse cx="425.6" cy="237.4" rx="3.4" ry="3.4" fill="#bb97ea" opacity="0.64"/><ellipse cx="357.5" cy="278.1" rx="4.1" ry="5.6" fill="#b48fe6" opacity="0.59"/><ellipse cx="418.7" cy="267.5" rx="3.1" ry="4.8" fill="#b48fe6" opacity="0.77"/><ellipse cx="316.3" cy="285.1" rx="4.7" ry="4.9" fill="#d8c2f5" opacity="0.84"/><ellipse cx="232.4" cy="286.8" rx="6.4" ry="9.9" fill="#b48fe6" opacity="0.58"/><ellipse cx="234.4" cy="286.0" rx="4.0" ry="4.5" fill="#b48fe6" opacity="0.90"/><ellipse cx="354.5" cy="258.3" rx="4.7" ry="7.0" fill="#a67edd" opacity="0.61"/><ellipse cx="242.7" cy="280.3" rx="5.5" ry="5.5" fill="#c9abf0" opacity="0.61"/><ellipse cx="338.3" cy="245.9" rx="4.5" ry="6.8" fill="#d8c2f5" opacity="0.82"/><ellipse cx="363.2" cy="298.7" rx="6.8" ry="6.5" fill="#bb97ea" opacity="0.53"/><ellipse cx="426.2" cy="262.0" rx="5.5" ry="7.2" fill="#c9abf0" opacity="0.61"/><ellipse cx="242.2" cy="299.7" rx="3.5" ry="4.0" fill="#d8c2f5" opacity="0.61"/><ellipse cx="285.2" cy="285.9" rx="5.6" ry="7.4" fill="#d8c2f5" opacity="0.62"/><ellipse cx="347.9" cy="260.8" rx="3.7" ry="3.2" fill="#c9abf0" opacity="0.70"/><ellipse cx="400.9" cy="272.2" rx="4.8" ry="7.7" fill="#a67edd" opacity="0.68"/><ellipse cx="261.0" cy="246.0" rx="3.4" ry="4.2" fill="#a67edd" opacity="0.63"/><ellipse cx="308.6" cy="291.1" rx="3.8" ry="5.3" fill="#b48fe6" opacity="0.67"/><ellipse cx="318.1" cy="270.3" rx="4.5" ry="6.3" fill="#a67edd" opacity="0.70"/><ellipse cx="351.5" cy="258.3" rx="5.7" ry="7.5" fill="#bb97ea" opacity="0.85"/><ellipse cx="276.9" cy="251.8" rx="4.0" ry="5.3" fill="#d8c2f5" opacity="0.67"/><ellipse cx="296.9" cy="291.4" rx="6.9" ry="5.7" fill="#c9abf0" opacity="0.78"/><ellipse cx="418.3" cy="266.5" rx="5.3" ry="4.6" fill="#b48fe6" opacity="0.87"/><ellipse cx="425.1" cy="270.5" rx="4.9" ry="4.9" fill="#d8c2f5" opacity="0.54"/><ellipse cx="264.1" cy="270.1" rx="5.7" ry="5.0" fill="#d8c2f5" opacity="0.81"/><ellipse cx="232.3" cy="241.2" rx="5.3" ry="6.9" fill="#b48fe6" opacity="0.62"/><ellipse cx="258.6" cy="250.4" rx="5.5" ry="4.9" fill="#b48fe6" opacity="0.62"/><ellipse cx="428.3" cy="246.0" rx="4.0" ry="3.2" fill="#bb97ea" opacity="0.71"/><ellipse cx="439.2" cy="252.3" rx="4.3" ry="5.0" fill="#c9abf0" opacity="0.59"/><ellipse cx="283.4" cy="302.1" rx="5.8" ry="4.9" fill="#a67edd" opacity="0.58"/><ellipse cx="416.0" cy="279.2" rx="3.3" ry="4.4" fill="#c9abf0" opacity="0.87"/><ellipse cx="279.2" cy="234.5" rx="4.4" ry="4.7" fill="#d8c2f5" opacity="0.66"/><ellipse cx="233.4" cy="253.3" rx="6.4" ry="6.2" fill="#b48fe6" opacity="0.89"/><ellipse cx="296.8" cy="291.9" rx="3.9" ry="4.0" fill="#c9abf0" opacity="0.86"/><ellipse cx="254.7" cy="277.5" rx="5.4" ry="6.5" fill="#c9abf0" opacity="0.86"/><ellipse cx="243.7" cy="275.4" rx="6.7" ry="6.5" fill="#b48fe6" opacity="0.89"/><ellipse cx="261.5" cy="235.8" rx="3.2" ry="3.8" fill="#d8c2f5" opacity="0.78"/><ellipse cx="297.4" cy="240.3" rx="3.3" ry="3.5" fill="#c9abf0" opacity="0.57"/><ellipse cx="426.7" cy="286.5" rx="3.1" ry="4.6" fill="#d8c2f5" opacity="0.89"/><ellipse cx="324.0" cy="240.0" rx="3.3" ry="3.6" fill="#b48fe6" opacity="0.88"/><ellipse cx="257.7" cy="302.4" rx="3.8" ry="5.4" fill="#a67edd" opacity="0.62"/><ellipse cx="399.2" cy="238.4" rx="5.8" ry="6.4" fill="#c9abf0" opacity="0.87"/><ellipse cx="272.1" cy="258.6" rx="6.6" ry="8.6" fill="#b48fe6" opacity="0.60"/><ellipse cx="362.1" cy="261.5" rx="4.5" ry="3.8" fill="#d8c2f5" opacity="0.87"/><ellipse cx="285.5" cy="286.6" rx="6.6" ry="7.2" fill="#a67edd" opacity="0.63"/><ellipse cx="430.4" cy="235.2" rx="6.0" ry="9.2" fill="#a67edd" opacity="0.62"/><ellipse cx="382.1" cy="275.5" rx="6.2" ry="5.1" fill="#b48fe6" opacity="0.59"/><ellipse cx="330.8" cy="301.8" rx="6.8" ry="9.8" fill="#d8c2f5" opacity="0.87"/><ellipse cx="401.5" cy="241.7" rx="5.0" ry="7.2" fill="#b48fe6" opacity="0.80"/><ellipse cx="403.1" cy="288.4" rx="5.4" ry="8.1" fill="#a67edd" opacity="0.68"/><ellipse cx="395.0" cy="275.5" rx="5.0" ry="7.1" fill="#d8c2f5" opacity="0.60"/><ellipse cx="245.5" cy="234.5" rx="5.2" ry="4.8" fill="#a67edd" opacity="0.67"/><ellipse cx="253.9" cy="237.3" rx="5.5" ry="4.8" fill="#c9abf0" opacity="0.70"/><ellipse cx="379.6" cy="264.6" rx="3.9" ry="4.6" fill="#d8c2f5" opacity="0.86"/><ellipse cx="280.9" cy="271.3" rx="6.1" ry="8.7" fill="#b48fe6" opacity="0.62"/></g>
</g>
</svg>
<!--PHOTO_END-->
<!-- selection -->
<svg style="left:430px;top:250px" width="480" height="400" viewBox="430 250 480 400">
<rect x="445" y="263" width="450" height="305.400" fill="none" stroke="#5cc88f" stroke-width="1.200"/>
<g fill="#fff" stroke="#2fc39c" stroke-width="1.500">
<circle cx="445" cy="263" r="3.800"/><circle cx="895" cy="263" r="3.800"/><circle cx="445" cy="568.400" r="3.800"/><circle cx="895" cy="568.400" r="3.800"/>
<rect x="661.500" y="259.600" width="17" height="6.800" rx="3.400"/><rect x="661.500" y="565" width="17" height="6.800" rx="3.400"/>
<rect x="441.600" y="407" width="6.800" height="17" rx="3.400"/><rect x="891.600" y="407" width="6.800" height="17" rx="3.400"/>
</g>
<path d="M670 398 V433 M652.500 415.500 H687.500" stroke="#d8d8d0" stroke-width=".8" opacity=".7"/>
</svg>
<div class="a" style="left:622px;top:578px;width:95px;height:28px;border-radius:5px;background:#1db976"></div>
<div class="t" style="left:622px;width:95px;text-align:center;top:586.800px;font-size:11px;font-weight:bold;color:#fff;word-spacing:1.200px">8 in x 5.43 in</div>
<div class="a" style="left:638px;top:613px;width:63px;height:31px;border-radius:8px;background:#fff;box-shadow:0 1px 5px rgba(0,0,0,.18)"></div>
<svg style="left:646px;top:620px" width="17" height="17" viewBox="0 0 17 17"><g fill="none" stroke="#222" stroke-width="1.300" stroke-linejoin="round"><path d="M1.600 4.400 H15.400"/><path d="M5.800 4.200 V2.600 Q5.800 1.800 6.600 1.800 H10.400 Q11.200 1.800 11.200 2.600 V4.200"/><path d="M3.200 4.600 L4 14 Q4.100 15.200 5.300 15.200 H11.700 Q12.900 15.200 13 14 L13.800 4.600"/><path d="M7.100 7.600 V12 M9.900 7.600 V12"/></g></svg>
<svg style="left:677px;top:620px" width="17" height="17" viewBox="0 0 17 17"><g fill="none" stroke="#222" stroke-width="1.300" stroke-linejoin="round"><path d="M4.600 11.400 H3 Q1.600 11.400 1.600 10 V3 Q1.600 1.600 3 1.600 H10 Q11.400 1.600 11.400 3 V4.600"/><rect x="5" y="5" width="10.200" height="10.200" rx="1.400"/><path d="M10.100 7.600 V12.600 M7.600 10.100 H12.600"/></g></svg>
<!-- cursor -->
<svg style="left:296px;top:237px" width="28" height="36" viewBox="0 0 28 36"><path d="M4.200 3.600 V26.400 L9.800 21.200 L13.600 30 L18 28.200 L14.200 19.600 L22 19.400 Z" fill="#000" stroke="#fff" stroke-width="1.800" stroke-linejoin="miter"/></svg>

<!-- panel -->
<div class="t" style="left:1269px;top:98px;font-size:11.100px;font-weight:bold;color:#178a5d">Layers</div>
<div class="t" style="left:1328px;top:98px;font-size:11.500px;color:#555;letter-spacing:.1px">Material Colors</div>
<svg style="left:1473px;top:99px" width="13" height="13" viewBox="0 0 13 13"><path d="M1.200 1.200 L11.800 11.800 M11.800 1.200 L1.200 11.800" stroke="#222" stroke-width="1.300"/></svg>
<div class="a" style="left:1256px;top:121px;width:244px;height:1px;background:#e2e2e2"></div>
<div class="a" style="left:1256px;top:119.500px;width:59px;height:2.500px;background:#10905f"></div>
<svg style="left:1270px;top:132px" width="17" height="17" viewBox="0 0 17 17"><g fill="none" stroke="#dcdcdc" stroke-width="1.200"><path d="M1.400 4.600 V2.600 Q1.400 1.400 2.600 1.400 H4.600 M12.400 1.400 H14.400 Q15.600 1.400 15.600 2.600 V4.600 M15.600 12.400 V14.400 Q15.600 15.600 14.400 15.600 H12.400 M4.600 15.600 H2.600 Q1.400 15.600 1.400 14.400 V12.400"/><circle cx="7.200" cy="7.200" r="3"/><rect x="7.400" y="7.400" width="5.600" height="5.600" rx="1"/></g></svg>
<svg style="left:1301px;top:132px" width="17" height="17" viewBox="0 0 17 17"><g fill="none" stroke="#222" stroke-width="1.300" stroke-linejoin="round"><path d="M4.600 11.400 H3 Q1.600 11.400 1.600 10 V3 Q1.600 1.600 3 1.600 H10 Q11.400 1.600 11.400 3 V4.600"/><rect x="5" y="5" width="10.200" height="10.200" rx="1.400"/><path d="M10.100 7.600 V12.600 M7.600 10.100 H12.600"/></g></svg>
<svg style="left:1332px;top:132px" width="17" height="17" viewBox="0 0 17 17"><g fill="none" stroke="#222" stroke-width="1.300" stroke-linejoin="round"><path d="M1.600 4.400 H15.400"/><path d="M5.800 4.200 V2.600 Q5.800 1.800 6.600 1.800 H10.400 Q11.200 1.800 11.200 2.600 V4.200"/><path d="M3.200 4.600 L4 14 Q4.100 15.200 5.300 15.200 H11.700 Q12.900 15.200 13 14 L13.800 4.600"/><path d="M7.100 7.600 V12 M9.900 7.600 V12"/></g></svg>
<div class="a" style="left:1256px;top:160px;width:244px;height:1px;background:#e6e6e6"></div>
<div class="a" style="left:1488px;top:161px;width:12px;height:607px;background:#f1f1f1"></div>
<div class="a" style="left:1488px;top:174px;width:12px;height:297px;background:#c1c1c1"></div>
<svg style="left:1488px;top:161px" width="12" height="607" viewBox="0 0 12 607"><path d="M2.800 8 L6 4.400 L9.200 8 Z M2.800 596.600 L6 600.200 L9.200 596.600 Z" fill="#444"/></svg>
<div class="a" style="left:1259px;top:164px;width:224px;height:43px;border-radius:3px;background:#b9eedb"></div>
<div class="a" style="left:1256px;top:161px;width:232px;height:607px;overflow:hidden">
<div class="t" style="left:53px;top:10.5px;font-size:11px;font-weight:bold;color:#2a2a2a;letter-spacing:.1px">Depositphotos_64157585...</div>
<div class="t" style="left:53px;top:26.0px;font-size:11px;color:#7d7d7d;letter-spacing:.1px">Print Then Cut</div>
<div class="t" style="left:53px;top:55.9px;font-size:11px;color:#5a5a5a;letter-spacing:.2px">svg-01-flower-photo-B-cra...</div>
<div class="t" style="left:53px;top:71.4px;font-size:11px;color:#8c8c8c;letter-spacing:.15px">Basic Cut</div>
<div class="t" style="left:53px;top:101.2px;font-size:11px;color:#5a5a5a;letter-spacing:.2px">svg-01-flower-photo-B-cra...</div>
<div class="t" style="left:53px;top:116.7px;font-size:11px;color:#8c8c8c;letter-spacing:.15px">Basic Cut</div>
<div class="t" style="left:53px;top:146.6px;font-size:11px;color:#5a5a5a;letter-spacing:.2px">svg-01-flower-photo-B-cra...</div>
<div class="t" style="left:53px;top:162.1px;font-size:11px;color:#8c8c8c;letter-spacing:.15px">Basic Cut</div>
<div class="t" style="left:53px;top:191.9px;font-size:11px;color:#5a5a5a;letter-spacing:.2px">svg-01-flower-photo-B-cra...</div>
<div class="t" style="left:53px;top:207.4px;font-size:11px;color:#8c8c8c;letter-spacing:.15px">Basic Cut</div>
<div class="t" style="left:53px;top:237.2px;font-size:11px;color:#5a5a5a;letter-spacing:.2px">svg-01-flower-photo-B-cra...</div>
<div class="t" style="left:53px;top:252.8px;font-size:11px;color:#8c8c8c;letter-spacing:.15px">Basic Cut</div>
<div class="t" style="left:53px;top:282.6px;font-size:11px;color:#5a5a5a;letter-spacing:.2px">svg-01-flower-photo-B-cra...</div>
<div class="t" style="left:53px;top:298.1px;font-size:11px;color:#8c8c8c;letter-spacing:.15px">Basic Cut</div>
<div class="t" style="left:53px;top:327.9px;font-size:11px;color:#5a5a5a;letter-spacing:.2px">svg-01-flower-photo-B-cra...</div>
<div class="t" style="left:53px;top:343.4px;font-size:11px;color:#8c8c8c;letter-spacing:.15px">Basic Cut</div>
<div class="t" style="left:53px;top:373.3px;font-size:11px;color:#5a5a5a;letter-spacing:.2px">svg-01-flower-photo-B-cra...</div>
<div class="t" style="left:53px;top:388.8px;font-size:11px;color:#8c8c8c;letter-spacing:.15px">Basic Cut</div>
<div class="t" style="left:53px;top:418.7px;font-size:11px;color:#5a5a5a;letter-spacing:.2px">svg-01-flower-photo-B-cra...</div>
<div class="t" style="left:53px;top:434.2px;font-size:11px;color:#8c8c8c;letter-spacing:.15px">Basic Cut</div>
<div class="t" style="left:53px;top:464.0px;font-size:11px;color:#5a5a5a;letter-spacing:.2px">svg-01-flower-photo-B-cra...</div>
<div class="t" style="left:53px;top:479.5px;font-size:11px;color:#8c8c8c;letter-spacing:.15px">Basic Cut</div>
<div class="t" style="left:53px;top:509.4px;font-size:11px;color:#5a5a5a;letter-spacing:.2px">svg-01-flower-photo-B-cra...</div>
<div class="t" style="left:53px;top:524.9px;font-size:11px;color:#8c8c8c;letter-spacing:.15px">Basic Cut</div>
<div class="t" style="left:53px;top:554.7px;font-size:11px;color:#5a5a5a;letter-spacing:.2px">svg-01-flower-photo-B-cra...</div>
<div class="t" style="left:53px;top:570.2px;font-size:11px;color:#8c8c8c;letter-spacing:.15px">Basic Cut</div>
<div class="t" style="left:53px;top:600.1px;font-size:11px;color:#5a5a5a;letter-spacing:.2px">svg-01-flower-photo-B-cra...</div>
<div class="t" style="left:53px;top:615.6px;font-size:11px;color:#8c8c8c;letter-spacing:.15px">Basic Cut</div>
<svg style="left:0;top:0" width="232" height="640" viewBox="0 0 232 640"><defs><linearGradient id="th2" x1="0" y1="0" x2="0" y2="1"><stop offset="0" stop-color="#c9c060"/><stop offset=".6" stop-color="#b0a45a"/><stop offset="1" stop-color="#8a78a0"/></linearGradient></defs><rect x="28.6" y="17.9" width="18.400" height="12" fill="url(#th2)"/><ellipse cx="41.2" cy="24.5" rx="3.400" ry="4.600" fill="#efe8e0"/><ellipse cx="40.8" cy="21.5" rx="2.600" ry="2" fill="#c89868"/><ellipse cx="34.8" cy="22.5" rx="2.400" ry="2.200" fill="#f2f0d0" opacity=".9"/><rect x="35.8" y="26.9" width="11" height="3" fill="#b090e0" opacity=".9"/><rect x="30.8" y="26.3" width="4" height="3" fill="#8060c0" opacity=".8"/><circle cx="37.8" cy="69.2" r="9.300" fill="#000"/><circle cx="37.8" cy="114.6" r="9.300" fill="#000"/><path d="M34.93 153.07 Q37.80 149.00 40.67 153.07 Q45.58 152.22 44.73 157.13 Q48.80 160.00 44.73 162.87 Q45.58 167.78 40.67 166.93 Q37.80 171.00 34.93 166.93 Q30.02 167.78 30.87 162.87 Q26.80 160.00 30.87 157.13 Q30.02 152.22 34.93 153.07 Z" fill="#d9521c" stroke="#5a2a10" stroke-width="0.9"/><circle cx="37.8" cy="160.0" r="4" fill="#fff" stroke="#5a2a10" stroke-width="0.9"/><path d="M34.93 198.37 Q37.80 194.30 40.67 198.37 Q45.58 197.52 44.73 202.43 Q48.80 205.30 44.73 208.17 Q45.58 213.08 40.67 212.23 Q37.80 216.30 34.93 212.23 Q30.02 213.08 30.87 208.17 Q26.80 205.30 30.87 202.43 Q30.02 197.52 34.93 198.37 Z" fill="#ecec14" stroke="#8a8420" stroke-width="0.9"/><circle cx="37.8" cy="205.3" r="4" fill="#fff" stroke="#8a8420" stroke-width="0.9"/><path d="M34.93 243.77 Q37.80 239.70 40.67 243.77 Q45.58 242.92 44.73 247.83 Q48.80 250.70 44.73 253.57 Q45.58 258.48 40.67 257.63 Q37.80 261.70 34.93 257.63 Q30.02 258.48 30.87 253.57 Q26.80 250.70 30.87 247.83 Q30.02 242.92 34.93 243.77 Z" fill="#fff" stroke="#6a6a6a" stroke-width="0.9" stroke-dasharray="1.800 1.200"/><path d="M28.4 296.0 Q34.8 289.2 42.3 293.6 Q43.8 294.4 47.2 295.0 V297.4 Q43.8 297.8 42.3 298.6 Q34.8 302.8 28.4 296.0 Z" fill="#5c9a2e" stroke="#3f6e1e" stroke-width=".8"/><path d="M47.2 341.4 Q40.8 334.6 33.3 339.0 Q31.8 339.8 28.4 340.4 V342.8 Q31.8 343.2 33.3 344.0 Q40.8 348.2 47.2 341.4 Z" fill="#5c9a2e" stroke="#3f6e1e" stroke-width=".8"/><rect x="29.0" y="384.7" width="17.600" height="4" rx=".8" fill="#efe8a0" stroke="#a8962a" stroke-width="1.300"/><rect x="29.0" y="429.9" width="17.600" height="4.400" rx=".8" fill="#ecec14" stroke="#a8a030" stroke-width=".8"/><path d="M28.8 469.4 H46.8 V472.8 H45.0 L43.6 485.2 H32.0 L30.6 472.8 H28.8 Z" fill="#e8c020" stroke="#8a6c10" stroke-width=".8"/><path d="M33.0 474.4 H42.6 L41.6 482.8 H34.0 Z" fill="#fff" stroke="#8a6c10" stroke-width=".6"/><path d="M28.8 514.8 H46.8 V518.2 H45.0 L43.6 530.6 H32.0 L30.6 518.2 H28.8 Z" fill="#ecec14" stroke="#a8a030" stroke-width=".8"/><path d="M34.93 561.17 Q37.80 557.10 40.67 561.17 Q45.58 560.32 44.73 565.23 Q48.80 568.10 44.73 570.97 Q45.58 575.88 40.67 575.03 Q37.80 579.10 34.93 575.03 Q30.02 575.88 30.87 570.97 Q26.80 568.10 30.87 565.23 Q30.02 560.32 34.93 561.17 Z" fill="#d9521c" stroke="#5a2a10" stroke-width="0.9"/><circle cx="37.8" cy="568.1" r="4" fill="#fff" stroke="#5a2a10" stroke-width="0.9"/><path d="M34.93 607.07 Q37.80 603.00 40.67 607.07 Q45.58 606.22 44.73 611.13 Q48.80 614.00 44.73 616.87 Q45.58 621.78 40.67 620.93 Q37.80 625.00 34.93 620.93 Q30.02 621.78 30.87 616.87 Q26.80 614.00 30.87 611.13 Q30.02 606.22 34.93 607.07 Z" fill="#ecec14" stroke="#8a8420" stroke-width="0.9"/><circle cx="37.8" cy="614.0" r="4" fill="#fff" stroke="#8a8420" stroke-width="0.9"/></svg>
</div>
<div class="a" style="left:1256px;top:768px;width:244px;height:37px;background:#fff;box-shadow:0 -2px 4px rgba(0,0,0,.06)"></div>
<div class="a" style="left:1268px;top:779px;width:15px;height:15px;border:1px solid #e2e2e2;border-radius:2.500px;background:#fff"></div>
<div class="t" style="left:1290px;top:781.500px;font-size:9.800px;color:#505050;letter-spacing:.12px">Background Color</div>
<div class="a" style="left:1256px;top:805px;width:244px;height:1px;background:#ececec"></div>
<div class="t" style="left:1259.5px;width:50px;text-align:center;top:831px;font-size:7.500px;color:#e9e9e9">Slice</div>
<div class="t" style="left:1303.8px;width:50px;text-align:center;top:831px;font-size:7.500px;color:#e9e9e9">Combine</div>
<div class="t" style="left:1348.3px;width:50px;text-align:center;top:831px;font-size:7.500px;color:#e9e9e9">Attach</div>
<div class="t" style="left:1392.5px;width:50px;text-align:center;top:831px;font-size:7.500px;color:#e9e9e9">Flatten</div>
<div class="t" style="left:1436.8px;width:50px;text-align:center;top:831px;font-size:7.500px;color:#e9e9e9">Contour</div>
<svg style="left:1256px;top:806px" width="244" height="24" viewBox="1256 806 244 24"><g fill="none" stroke="#ebebeb" stroke-width="1.200"><rect x="1279" y="812" width="8" height="8" rx="1"/><rect x="1283" y="816" width="7" height="7" rx="1"/><rect x="1319" y="811" width="8" height="8" rx="1"/><circle cx="1327" cy="820" r="4"/><path d="M1335 816 l2.500 2.500 l2.500 -2.500" /><rect x="1365" y="813" width="16" height="8" rx="4"/><path d="M1369 817 H1377"/><path d="M1409 819 l8 -3.500 l8 3.500 l-8 3.500 z M1417 809 v6"/><circle cx="1461.800" cy="817" r="6.500" stroke-dasharray="2.500 2"/></g></svg>
<!-- overlays -->
<svg style="left:1240px;top:123px" width="13" height="720" viewBox="0 0 13 720"><path d="M3.200 9.600 L6.500 5.800 L9.800 9.600 Z M3.200 698.400 L6.500 702.200 L9.800 698.400 Z" fill="#333"/><rect x="0" y="707" width="13" height="12" fill="#dcdcdc"/></svg>
<svg style="left:1226px;top:830px" width="14" height="12" viewBox="0 0 14 12"><path d="M5.400 2.800 L9.200 6 L5.400 9.200 Z" fill="#333"/></svg>
<div class="a" style="left:1189px;top:778px;width:47px;height:47px;border-radius:50%;background:#d4e2f4;box-shadow:0 0 10px 4px rgba(190,205,225,.45)"></div>
<svg style="left:1201px;top:790px" width="24" height="24" viewBox="0 0 24 24"><path d="M12 2.200 A9.400 9.400 0 1 0 16.400 19.900 L20.600 21.400 L19.700 17.400 A9.400 9.400 0 0 0 12 2.200 Z" fill="none" stroke="#1b3f72" stroke-width="1.700" stroke-linejoin="round"/><text x="12" y="16" font-size="12" font-weight="bold" text-anchor="middle" fill="#1b3f72" font-family="Liberation Sans, sans-serif">?</text></svg>
<div class="a" style="left:90px;top:797px;width:101px;height:34px;border:1px solid #ececec;border-radius:8px;background:#fff"></div>
<div class="t" style="left:109px;top:803px;font-size:12px;color:#bdbdbd;word-spacing:7px">&#8212; 20% +</div>
<div class="t" id="wm" style="left:11.500px;top:802.700px;font-family:'Liberation Serif',serif;font-weight:bold;font-size:31.500px;color:#1a6480;-webkit-text-stroke:1.200px #1a6480;letter-spacing:-.5px;word-spacing:3.600px;transform-origin:0 0;transform:scaleX(1.080);text-shadow:0 0 3px #fff,0 0 5px #fff,0 0 7px #fff,0 0 9px #fff,0 0 4px #fff,0 0 6px #fff,0 0 8px #fff,0 0 11px #fff,0 0 6px #fff"><span style="letter-spacing:-1.900px">Craft</span> <span style="letter-spacing:-.4px">with</span> <span style="letter-spacing:-.6px">Sarah</span></div>

</body>
</html>
